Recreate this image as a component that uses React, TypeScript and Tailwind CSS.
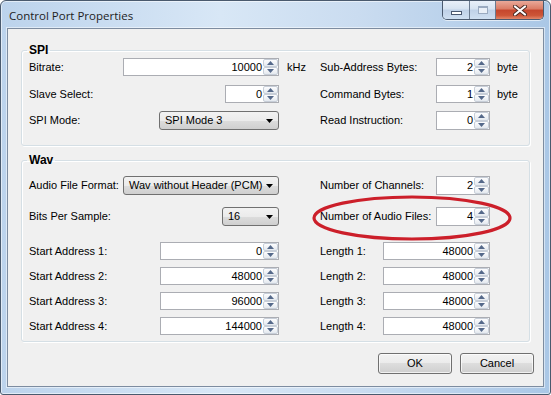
import React from 'react';

const SpinBtn = ({ up }: { up?: boolean }) => (
  <div className="flex flex-1 items-center justify-center rounded-[2px] border border-[#c7ced8] bg-[linear-gradient(#fdfdfe,#e4e9ef)]">
    <svg width="7" height="4" viewBox="0 0 7 4">
      <path d={up ? 'M0 4L3.5 0L7 4Z' : 'M0 0L3.5 4L7 0Z'} fill="#55698a" />
    </svg>
  </div>
);

const NumBox = ({ value, className }: { value: string; className: string }) => (
  <div className={`flex h-full items-stretch border border-[#abadb3] bg-white ${className}`}>
    <span className="flex flex-1 items-center justify-end pr-[1px]">{value}</span>
    <div className="flex w-[15px] flex-col">
      <SpinBtn up />
      <SpinBtn />
    </div>
  </div>
);

const Combo = ({ value, className }: { value: string; className: string }) => (
  <div
    className={`flex h-full items-center rounded-[3px] border border-[#707070] bg-[linear-gradient(#f2f2f2,#ebebeb_50%,#dddddd_50%,#cfcfcf)] pl-[5px] pr-[5px] ${className}`}
  >
    <span className="flex-1 whitespace-nowrap">{value}</span>
    <svg width="7" height="4" viewBox="0 0 7 4">
      <path d="M0 0H7L3.5 4Z" fill="#000" />
    </svg>
  </div>
);

const Cell = ({
  label,
  children,
  unit,
  right,
}: {
  label: string;
  children: React.ReactNode;
  unit?: string;
  right?: boolean;
}) => (
  <div className={`flex h-full items-center ${right ? 'w-[208px]' : 'w-[291px]'}`}>
    <span className="flex-1 whitespace-nowrap">{label}</span>
    {children}
    <span className={right ? 'w-[38px] pl-[7px]' : 'w-[41px] pl-[8px]'}>{unit}</span>
  </div>
);

const Group = ({ title, children, className }: { title: string; children: React.ReactNode; className: string }) => (
  <fieldset
    className={`mx-[13px] rounded-[3px] border border-[#d5dfe5] pl-[7px] shadow-[inset_1px_1px_0_#fff,1px_1px_0_#fff] ${className}`}
  >
    <legend className="ml-[-2px] px-[2px] text-[12px] font-bold leading-[14px]">{title}</legend>
    {children}
  </fieldset>
);

const Button = ({ text }: { text: string }) => (
  <div className="flex h-[21px] w-[74px] items-center justify-center rounded-[3px] border border-[#707070] bg-[linear-gradient(#f2f2f2,#ebebeb_50%,#dddddd_50%,#cfcfcf)] shadow-[inset_0_0_0_1px_rgba(255,255,255,0.7)]">
    {text}
  </div>
);

export default function App() {
  return (
    <div className="relative flex h-[395px] w-[551px] flex-col rounded-t-[6px] rounded-b-[3px] border border-[#4a5a6e] bg-[linear-gradient(90deg,#bcd3ec,#d8e7f6_40%,#cadcf0_65%,#aac7e6)] font-['Liberation_Sans',Arial,sans-serif] text-[11px] leading-[13px] text-black shadow-[inset_0_0_0_1px_rgba(255,255,255,0.55)]">
      {/* title bar */}
      <div className="flex h-[27px] items-start">
        <span className="pl-[8px] pt-[7px] font-['Open_Sans',sans-serif] text-[11.5px] leading-[15px] text-[#1e1e1e]">
          Control Port Properties
        </span>
        <div className="ml-auto mr-[6px] flex h-[19px] overflow-hidden rounded-b-[5px] border border-t-0 border-[#4b5a6f] shadow-[0_1px_0_rgba(255,255,255,0.6)]">
          <div className="flex w-[27px] items-end justify-center border-r border-[#6a7a8f] bg-[linear-gradient(#e9f0f9,#d6e3f1_45%,#bfd1e7_50%,#cfdff1)] pb-[4px]">
            <div className="h-[4px] w-[11px] border border-[#4a5870] bg-white" />
          </div>
          <div className="flex w-[26px] items-center justify-center border-r border-[#6a7a8f] bg-[linear-gradient(#e9f0f9,#d6e3f1_45%,#bfd1e7_50%,#cfdff1)]">
            <div className="h-[8px] w-[10px] border border-[#9aaac0] border-t-2 bg-[#e9eff7]" />
          </div>
          <div className="flex w-[47px] items-center justify-center bg-[linear-gradient(#e9a999,#da7b64_45%,#c5462d_50%,#cd5537_80%,#e2876a)]">
            <svg width="14" height="11" viewBox="0 0 14 11">
              <path d="M2 1.5L12 9.5M12 1.5L2 9.5" stroke="#4a2a22" strokeWidth="4" strokeLinecap="round" />
              <path d="M2 1.5L12 9.5M12 1.5L2 9.5" stroke="#fff" strokeWidth="2.2" strokeLinecap="round" />
            </svg>
          </div>
        </div>
      </div>

      {/* client area */}
      <div className="mx-[6px] flex h-[359px] flex-col border border-[#7d8ca0] bg-[#f0f0f0] shadow-[0_0_0_1px_rgba(255,255,255,0.5)]">
        <Group title="SPI" className="mt-[14px] pb-[15px]">
          <div className="mt-[1px] flex h-[18px]">
            <Cell label="Bitrate:" unit="kHz">
              <NumBox value="10000" className="w-[156px]" />
            </Cell>
            <Cell label="Sub-Address Bytes:" unit="byte" right>
              <NumBox value="2" className="w-[54px]" />
            </Cell>
          </div>
          <div className="mt-[9px] flex h-[18px]">
            <Cell label="Slave Select:">
              <NumBox value="0" className="w-[54px]" />
            </Cell>
            <Cell label="Command Bytes:" unit="byte" right>
              <NumBox value="1" className="w-[54px]" />
            </Cell>
          </div>
          <div className="mt-[8px] flex h-[19px]">
            <Cell label="SPI Mode:">
              <Combo value="SPI Mode 3" className="w-[120px]" />
            </Cell>
            <Cell label="Read Instruction:" right>
              <NumBox value="0" className="w-[54px]" />
            </Cell>
          </div>
        </Group>

        <Group title="Wav" className="mt-[7px] pb-[6px]">
          <div className="mt-[9px] flex h-[19px]">
            <Cell label="Audio File Format:">
              <Combo value="Wav without Header (PCM)" className="w-[156px]" />
            </Cell>
            <Cell label="Number of Channels:" right>
              <NumBox value="2" className="w-[54px]" />
            </Cell>
          </div>
          <div className="mt-[12px] flex h-[19px]">
            <Cell label="Bits Per Sample:">
              <Combo value="16" className="w-[57px]" />
            </Cell>
            <Cell label="Number of Audio Files:" right>
              <NumBox value="4" className="w-[54px]" />
            </Cell>
          </div>
          {[
            ['1', '0'],
            ['2', '48000'],
            ['3', '96000'],
            ['4', '144000'],
          ].map(([n, addr], i) => (
            <div key={n} className={`flex h-[18px] ${i === 0 ? 'mt-[16px]' : 'mt-[7px]'}`}>
              <Cell label={`Start Address ${n}:`}>
                <NumBox value={addr} className="w-[119px]" />
              </Cell>
              <Cell label={`Length ${n}:`} right>
                <NumBox value="48000" className="w-[107px]" />
              </Cell>
            </div>
          ))}
        </Group>

        <div className="mr-[9px] mt-[11px] flex justify-end gap-[8px]">
          <Button text="OK" />
          <Button text="Cancel" />
        </div>
      </div>

      {/* red annotation ellipse */}
      <svg className="pointer-events-none absolute left-0 top-0" width="551" height="395">
        <ellipse cx="411" cy="217" rx="98" ry="21" fill="none" stroke="#cc1f2a" strokeWidth="3.2" />
      </svg>
    </div>
  );
}
